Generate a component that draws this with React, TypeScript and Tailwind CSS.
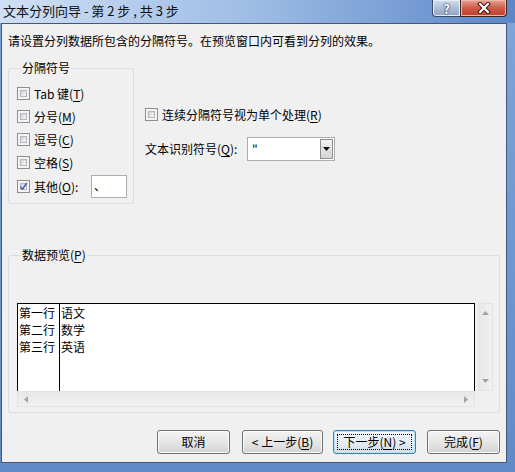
import React from 'react';

// access key letter shown underlined inside parentheses, e.g. (T)
const Key = ({ k }: { k: string }) => (
  <>
    (<span className="underline underline-offset-[2px]">{k}</span>)
  </>
);

const CheckBox = ({ checked = false }: { checked?: boolean }) => (
  <span className="relative flex w-[13px] h-[13px] shrink-0 border border-[#8e8f8f] bg-[#f4f4f4] p-[2px]">
    <span className="flex-1 border border-[#b4b8bd] bg-linear-to-br from-[#cfd3d8] to-[#f7f7f7]" />
    {checked && (
      <svg className="absolute left-[0px] top-[0px]" width="11" height="11" viewBox="0 0 11 11">
        <path d="M2.4 5.6 L4.4 8.3 L8.8 2" fill="none" stroke="#4a62a0" strokeWidth="1.5" strokeLinejoin="round" />
      </svg>
    )}
  </span>
);

const Arrow = ({ dir }: { dir: 'up' | 'down' | 'left' | 'right' }) => {
  const pts = {
    up: '0,4 3.5,0 7,4',
    down: '0,0 3.5,4 7,0',
    left: '4,0 0,3.5 4,7',
    right: '0,0 4,3.5 0,7',
  }[dir];
  const vertical = dir === 'up' || dir === 'down';
  return (
    <svg width={vertical ? 7 : 4} height={vertical ? 4 : 7} viewBox={vertical ? '0 0 7 4' : '0 0 4 7'}>
      <polygon points={pts} fill="#a3a3a3" />
    </svg>
  );
};

const Button = ({ children, w, isDefault = false }: { children: React.ReactNode; w: string; isDefault?: boolean }) => (
  <button
    className={`${w} h-[24px] rounded-[3px] border ${
      isDefault
        ? 'border-[#3c7fb1] shadow-[inset_0_0_0_1px_#b8e4fb] bg-linear-to-b from-[#f4f9fc] via-[#e6eef4] to-[#d4dde4]'
        : 'border-[#707070] shadow-[inset_0_0_0_1px_#fbfbfb] bg-linear-to-b from-[#f3f3f3] via-[#e6e6e6] to-[#d3d3d3]'
    } p-[3px] flex text-black`}
  >
    <span
      className={`flex-1 flex items-center justify-center ${
        isDefault ? 'outline outline-1 outline-dotted outline-black -outline-offset-1' : ''
      }`}
    >
      {children}
    </span>
  </button>
);

export default function App() {
  return (
    <div className="w-[515px] h-[472px] overflow-hidden flex flex-col bg-[#6e97cf] font-['Microsoft_YaHei','Noto_Sans_CJK_SC',sans-serif] text-[12px] leading-[16px] text-black">
      {/* caption bar */}
      <div className="h-[23px] shrink-0 flex bg-linear-to-r from-[#cfe0f4] via-[#9dbbe4] to-[#5b87c7]">
        <span className="pl-[3px] pt-[3px] text-[13px] leading-[16px] text-[#111]">文本分列向导 - 第 2 步 , 共 3 步</span>
        <div className="ml-auto mr-[8px] flex h-[17px]">
          <div className="w-[28px] flex items-center justify-center rounded-bl-[4px] border border-t-0 border-r-0 border-[#3b4a63] bg-linear-to-b from-[#d3deec] to-[#8da2c1] shadow-[inset_0_0_0_1px_#e6eef8]">
            <span className="text-[13px] leading-[13px] font-bold text-white [text-shadow:0_0_2px_#1b2a44,0_0_1px_#1b2a44]">?</span>
          </div>
          <div className="w-[47px] flex items-center justify-center rounded-br-[4px] border border-t-0 border-[#3b2320] bg-linear-to-b from-[#e7a595] via-[#cc5a47] to-[#c03d2b] shadow-[inset_0_0_0_1px_#f0b6a8]">
            <svg width="14" height="12" viewBox="0 0 14 12">
              <path d="M3 2 L11 10 M11 2 L3 10" stroke="#3a1a14" strokeWidth="4" strokeLinecap="square" />
              <path d="M3 2 L11 10 M11 2 L3 10" stroke="#ffffff" strokeWidth="2" strokeLinecap="square" />
            </svg>
          </div>
        </div>
      </div>

      {/* client area */}
      <div className="flex-1 flex pl-px pr-[8px] pb-[9px] bg-linear-to-b from-[#7ea5d9] to-[#5f8bc9]">
        <div className="flex-1 flex flex-col border border-[#435877] bg-[#f0f0f0] pl-[6px] pr-[6px] pt-[9px] pb-[8px]">
          <p>请设置分列数据所包含的分隔符号。在预览窗口内可看到分列的效果。</p>

          <div className="mt-[11px] flex">
            <fieldset className="w-[126px] h-[144px] rounded-[3px] border border-[#d5dfe5] pl-[8px] pt-[6px]">
              <legend className="ml-[4px] px-px">分隔符号</legend>
              <div className="flex flex-col">
                <label className="h-[23px] flex items-center gap-[4px]">
                  <CheckBox />
                  <span>Tab 键<Key k="T" /></span>
                </label>
                <label className="h-[23px] flex items-center gap-[4px]">
                  <CheckBox />
                  <span>分号<Key k="M" /></span>
                </label>
                <label className="h-[23px] flex items-center gap-[4px]">
                  <CheckBox />
                  <span>逗号<Key k="C" /></span>
                </label>
                <label className="h-[23px] flex items-center gap-[4px]">
                  <CheckBox />
                  <span>空格<Key k="S" /></span>
                </label>
                <div className="h-[23px] mt-px flex items-center">
                  <CheckBox checked />
                  <span className="ml-[4px] w-[57px]">其他<Key k="O" />:</span>
                  <div className="w-[36px] h-[23px] border border-[#abadb3] bg-white pl-[2px] pt-[2px] text-[12px]">、</div>
                </div>
              </div>
            </fieldset>

            <div className="ml-[11px] pt-[46px] flex flex-col">
              <label className="h-[17px] flex items-center gap-[4px]">
                <CheckBox />
                <span>连续分隔符号视为单个处理<Key k="R" /></span>
              </label>
              <div className="mt-[14px] flex items-center">
                <span className="w-[102px]">文本识别符号<Key k="Q" />:</span>
                <div className="w-[88px] h-[24px] flex border border-[#abadb3] bg-white p-px">
                  <span className="flex-1 pl-[3px] pt-[2px] text-black">"</span>
                  <span className="w-[13px] flex items-center justify-center border border-[#8e8f8f] bg-linear-to-b from-[#f2f2f2] to-[#d5d5d5]">
                    <svg width="7" height="4" viewBox="0 0 7 4">
                      <polygon points="0,0 7,0 3.5,4" fill="#111" />
                    </svg>
                  </span>
                </div>
              </div>
            </div>
          </div>

          <fieldset className="mt-[43px] h-[166px] rounded-[3px] border border-[#d5dfe5] pl-[8px] pt-[40px]">
            <legend className="ml-[4px] px-px">数据预览<Key k="P" /></legend>
            <div className="flex">
              <div className="w-[458px] flex flex-col">
                <div className="h-[88px] flex border border-b-0 border-black bg-white">
                  <div className="w-[42px] border-r border-black pl-px leading-[17px]">
                    <div>第一行</div>
                    <div>第二行</div>
                    <div>第三行</div>
                  </div>
                  <div className="flex-1 pl-px leading-[17px]">
                    <div>语文</div>
                    <div>数学</div>
                    <div>英语</div>
                  </div>
                </div>
                <div className="h-[16px] flex items-center justify-between px-[6px] border border-[#e3e3e3] bg-linear-to-b from-[#e8e8e8] to-[#f1f1f1]">
                  <Arrow dir="left" />
                  <Arrow dir="right" />
                </div>
              </div>
              <div className="ml-[3px] w-[15px] h-[88px] flex flex-col items-center justify-between py-[7px] border border-[#e3e3e3] bg-linear-to-r from-[#e8e8e8] to-[#f1f1f1]">
                <Arrow dir="up" />
                <Arrow dir="down" />
              </div>
            </div>
          </fieldset>

          <div className="mt-auto flex justify-end">
            <Button w="w-[73px]">取消</Button>
            <div className="ml-[12px]">
              <Button w="w-[81px]">&lt; 上一步<Key k="B" /></Button>
            </div>
            <div className="ml-[10px]">
              <Button w="w-[83px]" isDefault>下一步<Key k="N" />&nbsp;&gt;</Button>
            </div>
            <div className="ml-[11px]">
              <Button w="w-[73px]">完成<Key k="F" /></Button>
            </div>
          </div>
        </div>
      </div>
    </div>
  );
}
